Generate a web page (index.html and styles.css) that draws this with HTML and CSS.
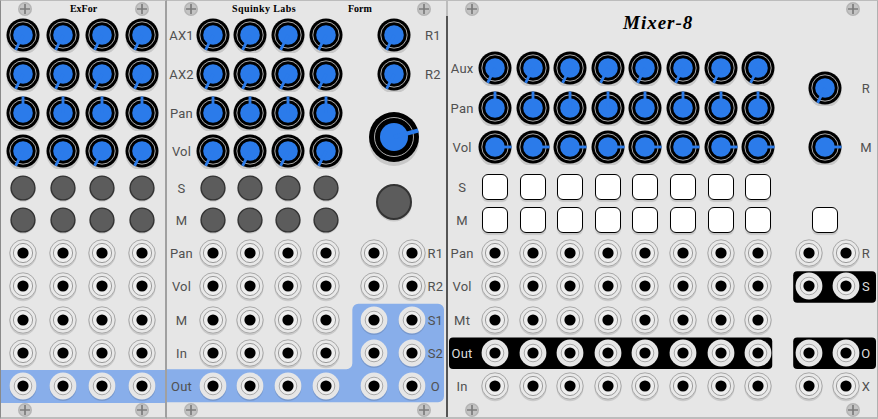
FILE: index.html
```html
<!DOCTYPE html>
<html>
<head>
  <title>Mixer-8</title>
  <meta charset="utf-8"/>
  <link rel="stylesheet" href="styles.css">
</head>
<body>
  <svg class="sprites">
    <symbol id="knob-low" viewBox="-18 -18 36 36">
      <circle cy="3" r="16.5" fill="#000" fill-opacity=".13"/>
      <circle r="16.5" fill="#000"/>
      <circle r="13.2" fill="none" stroke="#bdbdbd" stroke-width=".9"/>
      <circle r="9.8" fill="#2b7bea"/>
      <path d="M0 0L-7.4 14.8" stroke="#2b7bea" stroke-width="2.8"/>
    </symbol>
    <symbol id="knob-up" viewBox="-18 -18 36 36">
      <circle cy="3" r="16.5" fill="#000" fill-opacity=".13"/>
      <circle r="16.5" fill="#000"/>
      <circle r="13.2" fill="none" stroke="#bdbdbd" stroke-width=".9"/>
      <circle r="9.8" fill="#2b7bea"/>
      <path d="M0 0V-16.5" stroke="#2b7bea" stroke-width="2.8"/>
    </symbol>
    <symbol id="knob-right" viewBox="-18 -18 36 36">
      <circle cy="3" r="16.5" fill="#000" fill-opacity=".13"/>
      <circle r="16.5" fill="#000"/>
      <circle r="13.2" fill="none" stroke="#bdbdbd" stroke-width=".9"/>
      <circle r="9.8" fill="#2b7bea"/>
      <path d="M0 0H16.5" stroke="#2b7bea" stroke-width="2.8"/>
    </symbol>
    <symbol id="knob-big" viewBox="-30 -30 60 60">
      <circle cy="4" r="25" fill="#000" fill-opacity=".13"/>
      <circle r="25" fill="#000"/>
      <circle r="19.5" fill="none" stroke="#bdbdbd" stroke-width=".9"/>
      <circle r="14" fill="#2b7bea"/>
      <path d="M0 0L24.3 -6.5" stroke="#2b7bea" stroke-width="4"/>
    </symbol>
    <symbol id="push" viewBox="-20 -20 40 40">
      <circle cy="1.5" r="18" fill="#000" fill-opacity=".13"/>
      <circle r="17" fill="#5c5c5c" stroke="#333" stroke-width="2"/>
    </symbol>
    <symbol id="jack" viewBox="-16 -16 32 32">
      <circle cy="1.8" r="13.5" fill="#000" fill-opacity=".12"/>
      <circle r="13.2" fill="#e8e8e8" stroke="#a8a8a8"/>
      <circle r="9.6" fill="#eeeeee" stroke="#9a9a9a"/>
      <circle r="5.6" fill="#000"/>
    </symbol>
    <symbol id="jack-lit" viewBox="-16 -16 32 32">
      <circle cy="1.5" r="13.5" fill="#000" fill-opacity=".12"/>
      <circle r="13.4" fill="#e6e6e6"/>
      <circle r="8.8" fill="#eeeeee" stroke="#a8a8a8"/>
      <circle r="5.6" fill="#000"/>
    </symbol>
    <symbol id="screw" viewBox="-7 -7 14 14">
      <circle r="7" fill="#b5b5b5"/>
      <circle r="5.5" fill="#c4c4c4"/>
      <path d="M-5 0H5M0 -5V5" stroke="#7c7c7c" stroke-width="1.7"/>
    </symbol>
  </svg>

  <div class="rack">

    <section class="panel exfor">
      <div class="head">
        <svg class="screw"><use href="#screw"/></svg>
        <span class="title">ExFor</span>
        <svg class="screw"><use href="#screw"/></svg>
      </div>
      <div class="strip-grid">
        <svg class="knob"><use href="#knob-low"/></svg><svg class="knob"><use href="#knob-low"/></svg><svg class="knob"><use href="#knob-low"/></svg><svg class="knob"><use href="#knob-low"/></svg>
        <svg class="knob"><use href="#knob-low"/></svg><svg class="knob"><use href="#knob-low"/></svg><svg class="knob"><use href="#knob-low"/></svg><svg class="knob"><use href="#knob-low"/></svg>
        <svg class="knob"><use href="#knob-up"/></svg><svg class="knob"><use href="#knob-up"/></svg><svg class="knob"><use href="#knob-up"/></svg><svg class="knob"><use href="#knob-up"/></svg>
        <svg class="knob"><use href="#knob-low"/></svg><svg class="knob"><use href="#knob-low"/></svg><svg class="knob"><use href="#knob-low"/></svg><svg class="knob"><use href="#knob-low"/></svg>
        <svg class="push"><use href="#push"/></svg><svg class="push"><use href="#push"/></svg><svg class="push"><use href="#push"/></svg><svg class="push"><use href="#push"/></svg>
        <svg class="push"><use href="#push"/></svg><svg class="push"><use href="#push"/></svg><svg class="push"><use href="#push"/></svg><svg class="push"><use href="#push"/></svg>
      </div>
      <div class="jacks">
        <svg class="jack"><use href="#jack"/></svg><svg class="jack"><use href="#jack"/></svg><svg class="jack"><use href="#jack"/></svg><svg class="jack"><use href="#jack"/></svg>
        <svg class="jack"><use href="#jack"/></svg><svg class="jack"><use href="#jack"/></svg><svg class="jack"><use href="#jack"/></svg><svg class="jack"><use href="#jack"/></svg>
        <svg class="jack"><use href="#jack"/></svg><svg class="jack"><use href="#jack"/></svg><svg class="jack"><use href="#jack"/></svg><svg class="jack"><use href="#jack"/></svg>
        <svg class="jack"><use href="#jack"/></svg><svg class="jack"><use href="#jack"/></svg><svg class="jack"><use href="#jack"/></svg><svg class="jack"><use href="#jack"/></svg>
      </div>
      <div class="jacks lit-row">
        <svg class="jack"><use href="#jack-lit"/></svg><svg class="jack"><use href="#jack-lit"/></svg><svg class="jack"><use href="#jack-lit"/></svg><svg class="jack"><use href="#jack-lit"/></svg>
      </div>
      <div class="foot">
        <svg class="screw"><use href="#screw"/></svg>
        <svg class="screw"><use href="#screw"/></svg>
      </div>
    </section>

    <section class="panel form">
      <div class="head">
        <svg class="screw"><use href="#screw"/></svg>
        <span class="title squinky">Squinky Labs</span>
        <span class="title formname">Form</span>
        <svg class="screw"><use href="#screw"/></svg>
      </div>
      <div class="upper">
        <div class="strip-grid">
          <span class="lab">AX1</span><svg class="knob"><use href="#knob-low"/></svg><svg class="knob"><use href="#knob-low"/></svg><svg class="knob"><use href="#knob-low"/></svg><svg class="knob"><use href="#knob-low"/></svg>
          <span class="lab">AX2</span><svg class="knob"><use href="#knob-low"/></svg><svg class="knob"><use href="#knob-low"/></svg><svg class="knob"><use href="#knob-low"/></svg><svg class="knob"><use href="#knob-low"/></svg>
          <span class="lab">Pan</span><svg class="knob"><use href="#knob-up"/></svg><svg class="knob"><use href="#knob-up"/></svg><svg class="knob"><use href="#knob-up"/></svg><svg class="knob"><use href="#knob-up"/></svg>
          <span class="lab">Vol</span><svg class="knob"><use href="#knob-low"/></svg><svg class="knob"><use href="#knob-low"/></svg><svg class="knob"><use href="#knob-low"/></svg><svg class="knob"><use href="#knob-low"/></svg>
          <span class="lab">S</span><svg class="push"><use href="#push"/></svg><svg class="push"><use href="#push"/></svg><svg class="push"><use href="#push"/></svg><svg class="push"><use href="#push"/></svg>
          <span class="lab">M</span><svg class="push"><use href="#push"/></svg><svg class="push"><use href="#push"/></svg><svg class="push"><use href="#push"/></svg><svg class="push"><use href="#push"/></svg>
        </div>
        <div class="side-grid">
          <svg class="knob"><use href="#knob-low"/></svg><span class="lab">R1</span>
          <svg class="knob"><use href="#knob-low"/></svg><span class="lab">R2</span>
          <svg class="knob-big"><use href="#knob-big"/></svg>
          <svg class="push-big"><use href="#push"/></svg>
        </div>
      </div>
      <div class="stack">
        <svg class="plate" viewBox="0 0 280 166.5">
          <path d="M0 133.5H180a6 6 0 0 0 6 -6V73.6a6 6 0 0 1 6 -6H272a6 6 0 0 1 6 6V160.5a6 6 0 0 1 -6 6H0Z" fill="#88aeea"/>
        </svg>
        <div class="jacks">
          <span class="lab">Pan</span><svg class="jack"><use href="#jack"/></svg><svg class="jack"><use href="#jack"/></svg><svg class="jack"><use href="#jack"/></svg><svg class="jack"><use href="#jack"/></svg><i></i><svg class="jack"><use href="#jack"/></svg><svg class="jack"><use href="#jack"/></svg><span class="lab">R1</span>
          <span class="lab">Vol</span><svg class="jack"><use href="#jack"/></svg><svg class="jack"><use href="#jack"/></svg><svg class="jack"><use href="#jack"/></svg><svg class="jack"><use href="#jack"/></svg><i></i><svg class="jack"><use href="#jack"/></svg><svg class="jack"><use href="#jack"/></svg><span class="lab">R2</span>
          <span class="lab">M</span><svg class="jack"><use href="#jack"/></svg><svg class="jack"><use href="#jack"/></svg><svg class="jack"><use href="#jack"/></svg><svg class="jack"><use href="#jack"/></svg><i></i><svg class="jack"><use href="#jack-lit"/></svg><svg class="jack"><use href="#jack-lit"/></svg><span class="lab">S1</span>
          <span class="lab">In</span><svg class="jack"><use href="#jack"/></svg><svg class="jack"><use href="#jack"/></svg><svg class="jack"><use href="#jack"/></svg><svg class="jack"><use href="#jack"/></svg><i></i><svg class="jack"><use href="#jack-lit"/></svg><svg class="jack"><use href="#jack-lit"/></svg><span class="lab">S2</span>
          <span class="lab">Out</span><svg class="jack"><use href="#jack-lit"/></svg><svg class="jack"><use href="#jack-lit"/></svg><svg class="jack"><use href="#jack-lit"/></svg><svg class="jack"><use href="#jack-lit"/></svg><i></i><svg class="jack"><use href="#jack-lit"/></svg><svg class="jack"><use href="#jack-lit"/></svg><span class="lab">O</span>
        </div>
      </div>
      <div class="foot">
        <svg class="screw"><use href="#screw"/></svg>
        <svg class="screw"><use href="#screw"/></svg>
      </div>
    </section>

    <section class="panel mixer">
      <div class="head">
        <svg class="screw"><use href="#screw"/></svg>
        <svg class="screw"><use href="#screw"/></svg>
      </div>
      <h1 class="mixer-title">Mixer-8</h1>
      <div class="upper">
        <div class="strip-grid">
          <span class="lab">Aux</span><svg class="knob"><use href="#knob-low"/></svg><svg class="knob"><use href="#knob-low"/></svg><svg class="knob"><use href="#knob-low"/></svg><svg class="knob"><use href="#knob-low"/></svg><svg class="knob"><use href="#knob-low"/></svg><svg class="knob"><use href="#knob-low"/></svg><svg class="knob"><use href="#knob-low"/></svg><svg class="knob"><use href="#knob-low"/></svg>
          <span class="lab">Pan</span><svg class="knob"><use href="#knob-up"/></svg><svg class="knob"><use href="#knob-up"/></svg><svg class="knob"><use href="#knob-up"/></svg><svg class="knob"><use href="#knob-up"/></svg><svg class="knob"><use href="#knob-up"/></svg><svg class="knob"><use href="#knob-up"/></svg><svg class="knob"><use href="#knob-up"/></svg><svg class="knob"><use href="#knob-up"/></svg>
          <span class="lab">Vol</span><svg class="knob"><use href="#knob-right"/></svg><svg class="knob"><use href="#knob-right"/></svg><svg class="knob"><use href="#knob-right"/></svg><svg class="knob"><use href="#knob-right"/></svg><svg class="knob"><use href="#knob-right"/></svg><svg class="knob"><use href="#knob-right"/></svg><svg class="knob"><use href="#knob-right"/></svg><svg class="knob"><use href="#knob-right"/></svg>
          <span class="lab">S</span><div class="latch"></div><div class="latch"></div><div class="latch"></div><div class="latch"></div><div class="latch"></div><div class="latch"></div><div class="latch"></div><div class="latch"></div>
          <span class="lab">M</span><div class="latch"></div><div class="latch"></div><div class="latch"></div><div class="latch"></div><div class="latch"></div><div class="latch"></div><div class="latch"></div><div class="latch"></div>
        </div>
        <div class="side-grid">
          <svg class="knob master-r"><use href="#knob-low"/></svg><span class="lab master-r">R</span>
          <svg class="knob"><use href="#knob-right"/></svg><span class="lab">M</span>
          <div class="latch master-m"></div>
        </div>
      </div>
      <div class="stack">
        <svg class="plate" viewBox="0 0 430 166.5">
          <rect x="1" y="101.6" width="324" height="31.6" rx="4" fill="#000"/>
          <rect x="346" y="35.2" width="83" height="31.6" rx="4" fill="#000"/>
          <rect x="346" y="101.6" width="83" height="31.6" rx="4" fill="#000"/>
        </svg>
        <div class="jacks">
          <span class="lab">Pan</span><svg class="jack"><use href="#jack"/></svg><svg class="jack"><use href="#jack"/></svg><svg class="jack"><use href="#jack"/></svg><svg class="jack"><use href="#jack"/></svg><svg class="jack"><use href="#jack"/></svg><svg class="jack"><use href="#jack"/></svg><svg class="jack"><use href="#jack"/></svg><svg class="jack"><use href="#jack"/></svg><i></i><svg class="jack"><use href="#jack"/></svg><svg class="jack"><use href="#jack"/></svg><span class="lab">R</span>
          <span class="lab">Vol</span><svg class="jack"><use href="#jack"/></svg><svg class="jack"><use href="#jack"/></svg><svg class="jack"><use href="#jack"/></svg><svg class="jack"><use href="#jack"/></svg><svg class="jack"><use href="#jack"/></svg><svg class="jack"><use href="#jack"/></svg><svg class="jack"><use href="#jack"/></svg><svg class="jack"><use href="#jack"/></svg><i></i><svg class="jack"><use href="#jack-lit"/></svg><svg class="jack"><use href="#jack-lit"/></svg><span class="lab on-black">S</span>
          <span class="lab">Mt</span><svg class="jack"><use href="#jack"/></svg><svg class="jack"><use href="#jack"/></svg><svg class="jack"><use href="#jack"/></svg><svg class="jack"><use href="#jack"/></svg><svg class="jack"><use href="#jack"/></svg><svg class="jack"><use href="#jack"/></svg><svg class="jack"><use href="#jack"/></svg><svg class="jack"><use href="#jack"/></svg><i></i><i></i><i></i><i></i>
          <span class="lab on-black">Out</span><svg class="jack"><use href="#jack-lit"/></svg><svg class="jack"><use href="#jack-lit"/></svg><svg class="jack"><use href="#jack-lit"/></svg><svg class="jack"><use href="#jack-lit"/></svg><svg class="jack"><use href="#jack-lit"/></svg><svg class="jack"><use href="#jack-lit"/></svg><svg class="jack"><use href="#jack-lit"/></svg><svg class="jack"><use href="#jack-lit"/></svg><i></i><svg class="jack"><use href="#jack-lit"/></svg><svg class="jack"><use href="#jack-lit"/></svg><span class="lab on-black">O</span>
          <span class="lab">In</span><svg class="jack"><use href="#jack"/></svg><svg class="jack"><use href="#jack"/></svg><svg class="jack"><use href="#jack"/></svg><svg class="jack"><use href="#jack"/></svg><svg class="jack"><use href="#jack"/></svg><svg class="jack"><use href="#jack"/></svg><svg class="jack"><use href="#jack"/></svg><svg class="jack"><use href="#jack"/></svg><i></i><svg class="jack"><use href="#jack"/></svg><svg class="jack"><use href="#jack"/></svg><span class="lab">X</span>
        </div>
      </div>
      <div class="foot">
        <svg class="screw"><use href="#screw"/></svg>
        <svg class="screw"><use href="#screw"/></svg>
      </div>
    </section>

  </div>
</body>
</html>
```
FILE: styles.css
```css
html, body {
	margin: 0;
	background: #e6e6e6;
	overflow: hidden;
}
.sprites {
	display: none;
}
.rack {
	display: flex;
	width: 878px;
	height: 419px;
	overflow: hidden;
	font-family: Roboto, "Liberation Sans", sans-serif;
}

/* panels */
.panel {
	box-sizing: border-box;
	height: 419px;
	background: #e6e6e6;
	border-top: 1px solid #bcbcbc;
	border-bottom: 2px solid #bcbcbc;
	flex: none;
}
.exfor {
	width: 167px;
	border-left: 1px solid #8a8a8a;
	border-right: 2px solid #a0a0a0;
}
.form {
	width: 281px;
	padding-right: 2px;
	/* the divider is pale beside the screw and dark below it */
	background: linear-gradient(#bdbdbd 15px, #555 15px) right / 2px 100% no-repeat #e6e6e6;
}
.mixer {
	width: 430px;
	border-right: 1px solid #b0b0b0;
}

/* head and foot hold the screws */
.head, .foot {
	display: flex;
	align-items: center;
	justify-content: space-between;
	height: 15px;
}
.foot {
	height: 14px;
}
.exfor .head, .exfor .foot {
	padding: 0 16px 0 17px;
}
.form .head, .form .foot {
	padding: 0 15px 0 17px;
}
.mixer .head, .mixer .foot {
	padding: 0 17px 0 17px;
}
.screw {
	width: 14px;
	height: 14px;
	flex: none;
}
.title {
	font-family: "Liberation Serif", serif;
	font-weight: bold;
	font-size: 10px;
	color: #000;
}
.squinky {
	margin-left: 34px;
	letter-spacing: .4px;
}
.formname {
	margin-left: 52px;
	margin-right: auto;
}
.mixer-title {
	margin: 0;
	height: 32.25px;
	padding-left: 175px;
	font-family: "Liberation Serif", serif;
	font-style: italic;
	font-weight: bold;
	font-size: 19px;
	line-height: 14px;
	letter-spacing: 1px;
	color: #000;
}

/* control grids */
.upper {
	display: flex;
}
.strip-grid, .side-grid {
	display: grid;
	place-items: center;
	grid-template-rows: repeat(4, 38.7px) 35.4px 27.6px;
	flex: none;
}
.exfor .strip-grid {
	grid-template-columns: repeat(4, 39.8px);
	padding-left: 2px;
}
.form .strip-grid {
	grid-template-columns: 25px repeat(4, 37.6px);
	padding-left: 2px;
}
.form .side-grid {
	grid-template-columns: 60px 17px;
	margin-left: 20px;
}
.knob-big {
	grid-column: 1;
	grid-row: 3 / 5;
	width: 60px;
	height: 60px;
	margin-top: 10px;
}
.push-big {
	grid-column: 1;
	grid-row: 5 / 7;
	width: 40px;
	height: 40px;
}
.mixer .strip-grid, .mixer .side-grid {
	grid-template-rows: repeat(3, 39.5px) 40.5px 25.5px;
}
.mixer .strip-grid {
	grid-template-columns: 28.2px repeat(8, 37.6px);
}
.mixer .side-grid {
	grid-template-columns: 71px 10px;
	margin-left: 13px;
}
.knob.master-r {
	grid-column: 1;
	grid-row: 1 / 3;
}
.lab.master-r {
	grid-column: 2;
	grid-row: 1 / 3;
}
.latch.master-m {
	grid-column: 1;
	grid-row: 5;
}

/* widgets */
.knob {
	width: 36px;
	height: 36px;
}
.push {
	width: 28px;
	height: 28px;
}
.jack {
	width: 32px;
	height: 32px;
}
.latch {
	box-sizing: border-box;
	width: 26px;
	height: 26px;
	background: #fff;
	border: 1.5px solid #000;
	border-radius: 6px;
	box-shadow: 0 2px 1px rgba(0, 0, 0, .14);
}
.lab {
	font-size: 13px;
	line-height: 16px;
	letter-spacing: .2px;
	color: #505050;
	white-space: nowrap;
	transform: translateY(1px);
}
.lab.on-black {
	color: #ddd;
}

/* jack rows */
.jacks {
	display: grid;
	place-items: center;
	grid-auto-rows: 33.3px;
}
.exfor .jacks {
	grid-template-columns: repeat(4, 39.8px);
	padding-left: 2px;
	margin-top: 2.6px;
}
.exfor .lit-row {
	margin-top: 0;
	background: #88aeea;
}
.stack {
	display: grid;
	margin-top: 2.6px;
}
.mixer .stack {
	margin-top: 3.65px;
}
.stack > * {
	grid-area: 1 / 1;
}
.plate {
	width: 100%;
	height: 166.5px;
}
.form .jacks {
	grid-template-columns: 25px repeat(4, 37.6px) 10.8px 37.6px 37.6px 10px;
	padding-left: 2px;
}
.mixer .jacks {
	grid-template-columns: 28.2px repeat(8, 37.6px) 13px 38px 36px 4px;
}
```
